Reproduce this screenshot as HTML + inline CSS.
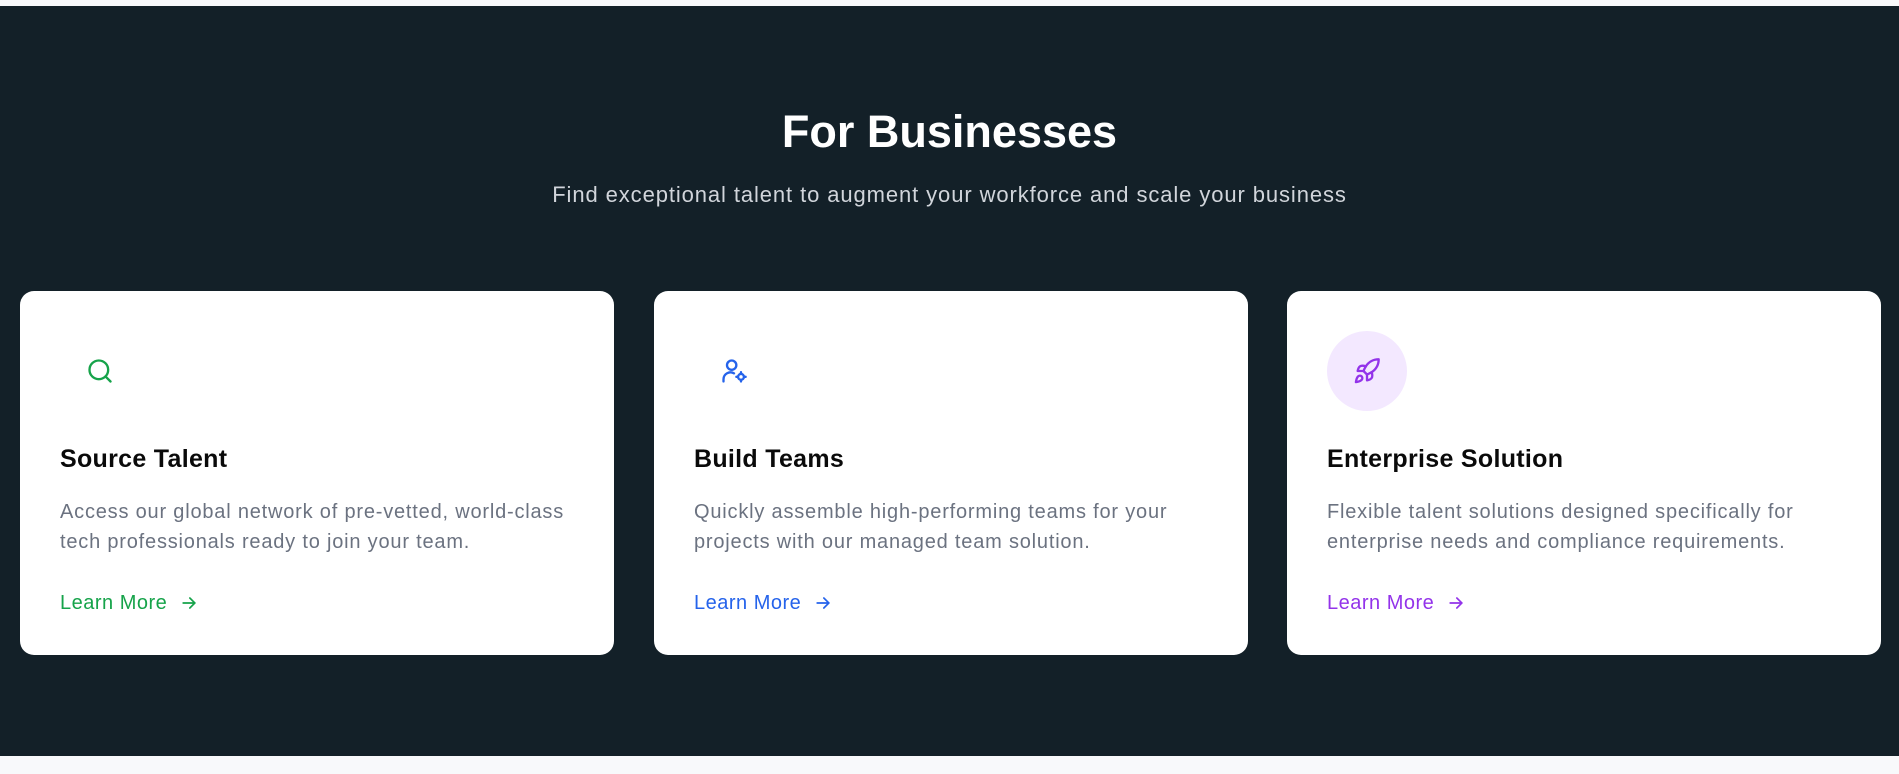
<!DOCTYPE html>
<html><head><meta charset="utf-8"><style>
*{margin:0;padding:0;box-sizing:border-box}
body{width:1899px;height:774px;background:#f8f9fb;font-family:"Liberation Sans",sans-serif;overflow:hidden;position:relative}
.sec{position:absolute;left:0;top:6px;width:1899px;height:750px;background:#132028}
h1{position:absolute;top:98px;width:100%;text-align:center;color:#fff;font-size:45px;font-weight:bold;line-height:56px}
.sub{position:absolute;top:175px;width:100%;text-align:center;color:#d1d5db;font-size:22px;letter-spacing:0.9px;line-height:28px}
.card{position:absolute;top:285px;width:594px;height:364px;background:#fff;border-radius:14px;padding:40px}
.ic{width:80px;height:80px;border-radius:50%;display:flex;align-items:center;justify-content:center}
.t{margin-top:32px;font-size:25px;letter-spacing:0.3px;font-weight:bold;line-height:32px;color:#0a0a0a}
.d{margin-top:22px;font-size:20px;letter-spacing:0.8px;line-height:30px;color:#6b7280}
.l{margin-top:34px;font-size:20px;letter-spacing:0.5px;line-height:24px;display:flex;align-items:center;gap:12px}
</style></head><body>
<div class="sec">
<h1>For Businesses</h1>
<div class="sub">Find exceptional talent to augment your workforce and scale your business</div>
<div class="card" style="left:20px">
<div class="ic"><svg width="28" height="28" viewBox="0 0 24 24" fill="none" stroke="#16a34a" stroke-width="2" stroke-linecap="round"><circle cx="11" cy="11" r="8"/><path d="M21 21l-4.3-4.3"/></svg></div>
<div class="t">Source Talent</div>
<div class="d">Access our global network of pre-vetted, world-class<br>tech professionals ready to join your team.</div>
<div class="l" style="color:#16a34a">Learn More <svg width="20" height="20" viewBox="0 0 24 24" fill="none" stroke="currentColor" stroke-width="2" stroke-linecap="round"><path d="M5 12h14M13 6l6 6-6 6"/></svg></div>
</div>
<div class="card" style="left:654px">
<div class="ic"><svg width="28" height="28" viewBox="0 0 24 24" fill="none" stroke="#2563eb" stroke-width="2" stroke-linecap="round"><circle cx="10" cy="7" r="4"/><path d="M3 21v-2a6 6 0 0 1 9-5"/><circle cx="18" cy="17" r="2.5"/><path d="M18 13v1.5M18 19.5V21M14 17h1.5M20.5 17H22"/></svg></div>
<div class="t">Build Teams</div>
<div class="d">Quickly assemble high-performing teams for your<br>projects with our managed team solution.</div>
<div class="l" style="color:#2563eb">Learn More <svg width="20" height="20" viewBox="0 0 24 24" fill="none" stroke="currentColor" stroke-width="2" stroke-linecap="round"><path d="M5 12h14M13 6l6 6-6 6"/></svg></div>
</div>
<div class="card" style="left:1287px">
<div class="ic" style="background:#f3e8ff"><svg width="28" height="28" viewBox="0 0 24 24" fill="none" stroke="#9333ea" stroke-width="2" stroke-linecap="round" stroke-linejoin="round"><path d="M4.5 16.5c-1.5 1.3-2 5-2 5s3.7-.5 5-2c.7-.8.7-2.1-.1-2.9a2.2 2.2 0 0 0-2.9-.1z"/><path d="M12 15l-3-3a22 22 0 0 1 2-4A13 13 0 0 1 22 2c0 2.7-.8 7.5-6 11a22 22 0 0 1-4 2z"/><path d="M9 12H4s.6-3 2-4c1.6-1.1 5 0 5 0M12 15v5s3-.6 4-2c1.1-1.6 0-5 0-5"/></svg></div>
<div class="t">Enterprise Solution</div>
<div class="d">Flexible talent solutions designed specifically for<br>enterprise needs and compliance requirements.</div>
<div class="l" style="color:#9333ea">Learn More <svg width="20" height="20" viewBox="0 0 24 24" fill="none" stroke="currentColor" stroke-width="2" stroke-linecap="round"><path d="M5 12h14M13 6l6 6-6 6"/></svg></div>
</div>
</div>
</body></html>
